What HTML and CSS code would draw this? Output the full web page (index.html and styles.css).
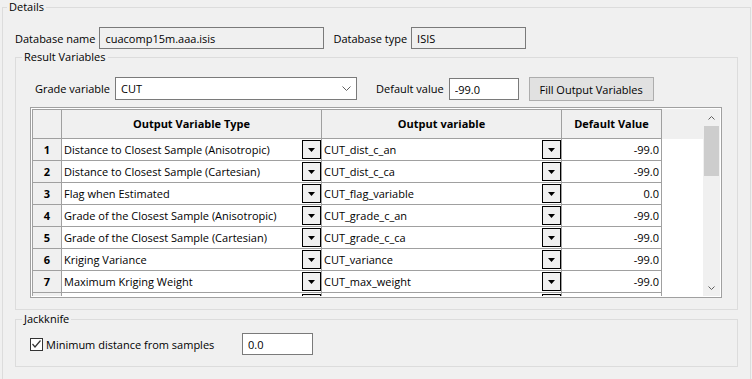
FILE: index.html
```html
<!DOCTYPE html>
<html lang="en">
<head>
  <meta charset="UTF-8">
  <title>Output Variables</title>
  <link rel="stylesheet" href="styles.css">
</head>
<body>
  <fieldset class="group group-details">
    <legend>Details</legend>
    <div class="form-row">
      <label class="lbl">Database name</label>
      <input class="textbox readonly w-dbname" value="cuacomp15m.aaa.isis" readonly>
      <label class="lbl lbl-dbtype">Database type</label>
      <input class="textbox readonly w-dbtype" value="ISIS" readonly>
    </div>

    <fieldset class="group group-result">
      <legend>Result Variables</legend>
      <div class="grade-row">
        <label class="lbl">Grade variable</label>
        <div class="combo">
          <span>CUT</span>
          <svg width="9" height="5" viewBox="0 0 9 5"><path d="M0.5 0.5L4.5 4.5L8.5 0.5" fill="none" stroke="#606060" stroke-width="1"/></svg>
        </div>
        <label class="lbl lbl-default">Default value</label>
        <input class="textbox w-default" value="-99.0">
        <button class="btn">Fill Output Variables</button>
      </div>

      <div class="grid-frame">
        <div class="grid-view">
          <table class="grid">
            <thead>
              <tr>
                <th class="c-num"></th>
                <th class="c-type">Output Variable Type</th>
                <th class="c-var">Output variable</th>
                <th class="c-def">Default Value</th>
                <th class="fill"></th>
              </tr>
            </thead>
            <tbody id="grid-body"></tbody>
          </table>
        </div>
        <div class="vscroll">
          <div class="sb-btn">
            <svg width="7" height="4" viewBox="0 0 7 4"><path d="M0.5 3.5L3.5 0.5L6.5 3.5" fill="none" stroke="#606060"/></svg>
          </div>
          <div class="sb-track"><div class="sb-thumb"></div></div>
          <div class="sb-btn">
            <svg width="7" height="4" viewBox="0 0 7 4"><path d="M0.5 0.5L3.5 3.5L6.5 0.5" fill="none" stroke="#606060"/></svg>
          </div>
        </div>
      </div>
    </fieldset>

    <fieldset class="group group-jack">
      <legend>Jackknife</legend>
      <div class="check-row">
        <label class="check">
          <span class="box">
            <svg width="11" height="11" viewBox="0 0 11 11"><path d="M1.5 5L4 8L9.5 1.5" fill="none" stroke="#333" stroke-width="1.2"/></svg>
          </span>
          Minimum distance from samples
        </label>
        <input class="textbox w-jack" value="0.0">
      </div>
    </fieldset>
  </fieldset>

  <script>
    // last row is only peeking out under the viewport, its text is not visible
    const rows = [
      ['Distance to Closest Sample (Anisotropic)', 'CUT_dist_c_an', '-99.0'],
      ['Distance to Closest Sample (Cartesian)', 'CUT_dist_c_ca', '-99.0'],
      ['Flag when Estimated', 'CUT_flag_variable', '0.0'],
      ['Grade of the Closest Sample (Anisotropic)', 'CUT_grade_c_an', '-99.0'],
      ['Grade of the Closest Sample (Cartesian)', 'CUT_grade_c_ca', '-99.0'],
      ['Kriging Variance', 'CUT_variance', '-99.0'],
      ['Maximum Kriging Weight', 'CUT_max_weight', '-99.0'],
      ['', '', '']
    ];
    const gridBody = document.getElementById('grid-body');
    const dropHtml = '<span class="drop"><svg width="7" height="4" viewBox="0 0 7 4"><path d="M0 0h7L3.5 4z"/></svg></span>';

    rows.forEach((row, i) => {
      const tr = document.createElement('tr');
      tr.innerHTML =
        `<th class="c-num">${row[0] ? i + 1 : ''}</th>` +
        `<td class="pick-cell"><div class="pick"><span>${row[0]}</span>${dropHtml}</div></td>` +
        `<td class="pick-cell"><div class="pick"><span>${row[1]}</span>${dropHtml}</div></td>` +
        `<td class="num">${row[2]}</td>` +
        `<td class="fill"></td>`;
      gridBody.appendChild(tr);
    });
  </script>
</body>
</html>
```

FILE: styles.css
```css
* {
  box-sizing: border-box;
}

body {
  margin: 0;
  width: 752px;
  height: 379px;
  overflow: hidden;
  background: #f0f0f0;
  font-family: "Open Sans", sans-serif;
  font-size: 11px;
  color: #000;
}

.group {
  border: 1px solid #dcdcdc;
  margin: 0;
  min-width: 0;
}

.group > legend {
  padding: 0 2px;
  margin-left: -8px;
  height: 14px;
  line-height: 14px;
}

.group-details {
  margin: 0 1px 0 2px;
  padding: 13px 12px 20px 12px;
}

.group-result {
  margin-top: 1px;
  padding: 13px 15px 11px 14px;
}

.group-jack {
  margin-top: 2px;
  padding: 7px 14px 11px 14px;
}

.lbl {
  flex: none;
  white-space: nowrap;
}

.textbox {
  height: 22px;
  border: 1px solid #7a7a7a;
  background: #fff;
  font: inherit;
  color: #000;
  padding: 0 5px;
  margin: 0;
  outline: none;
}

.textbox.readonly {
  background: #f0f0f0;
}

.form-row {
  display: flex;
  align-items: center;
  gap: 4px;
  height: 22px;
}

.w-dbname { width: 225px; }
.w-dbtype { width: 115px; }
.lbl-dbtype { margin-left: 5px; }

.grade-row {
  display: flex;
  align-items: flex-start;
  gap: 5px;
  height: 24px;
  padding-left: 5px;
}

.grade-row .lbl {
  line-height: 23px;
}

.combo {
  width: 242px;
  height: 23px;
  border: 1px solid #7a7a7a;
  background: #fff;
  display: flex;
  align-items: center;
  justify-content: space-between;
  padding: 0 5px 0 5px;
}

.lbl-default { margin-left: 14px; }

.w-default {
  width: 70px;
  margin-top: 1px;
}

.btn {
  width: 125px;
  height: 24px;
  margin-left: 5px;
  border: 1px solid #adadad;
  background: #e1e1e1;
  font: inherit;
  color: #000;
  padding: 0;
}

.grid-frame {
  display: flex;
  height: 191px;
  margin-top: 6px;
  border: 1px solid #a0a0a0;
  padding: 1px;
  background: #fff;
}

.grid-view {
  width: 671px;
  height: 187px;
  overflow: hidden;
}

.grid {
  border-collapse: separate;
  border-spacing: 0;
  table-layout: fixed;
  width: 671px;
}

.grid th,
.grid td {
  padding: 0 2px;
  border-right: 1px solid #a0a0a0;
  border-bottom: 1px solid #a0a0a0;
  line-height: 14px;
  white-space: nowrap;
  overflow: hidden;
}

.grid thead tr { height: 30px; }
.grid tbody tr { height: 22px; }

.grid thead th {
  border-top: 1px solid #a0a0a0;
  background: #f0f0f0;
  font-weight: bold;
  text-align: center;
}

.grid .c-num {
  width: 30px;
  border-left: 1px solid #a0a0a0;
  background: #f0f0f0;
  font-weight: bold;
  text-align: center;
}

.grid .c-type { width: 260px; }
.grid .c-var { width: 240px; }
.grid .c-def { width: 100px; }

.grid .fill {
  width: 41px;
  border: none;
}

.grid thead .fill {
  border-top: none;
}

.grid td {
  background: #fff;
}

.grid td.pick-cell {
  padding-right: 0;
}

.pick {
  display: flex;
  align-items: center;
}

.pick span:first-child {
  flex: 1;
  overflow: hidden;
}

.drop {
  flex: none;
  width: 19px;
  height: 19px;
  border: 1px solid #000;
  background: #f0f0f0;
  display: flex;
  align-items: center;
  justify-content: center;
}

.grid td.num {
  text-align: right;
}

.vscroll {
  width: 17px;
  display: flex;
  flex-direction: column;
  background: #f0f0f0;
}

.sb-btn {
  height: 17px;
  display: flex;
  align-items: center;
  justify-content: center;
}

.sb-track {
  flex: 1;
}

.sb-thumb {
  height: 50px;
  margin: 0 1px;
  background: #cdcdcd;
}

.check-row {
  display: flex;
  align-items: center;
  height: 22px;
}

.check {
  display: flex;
  align-items: center;
  gap: 3px;
  width: 212px;
}

.box {
  width: 13px;
  height: 13px;
  border: 1px solid #333;
  background: #fff;
  display: flex;
  align-items: center;
  justify-content: center;
}

.w-jack {
  width: 71px;
}
```
